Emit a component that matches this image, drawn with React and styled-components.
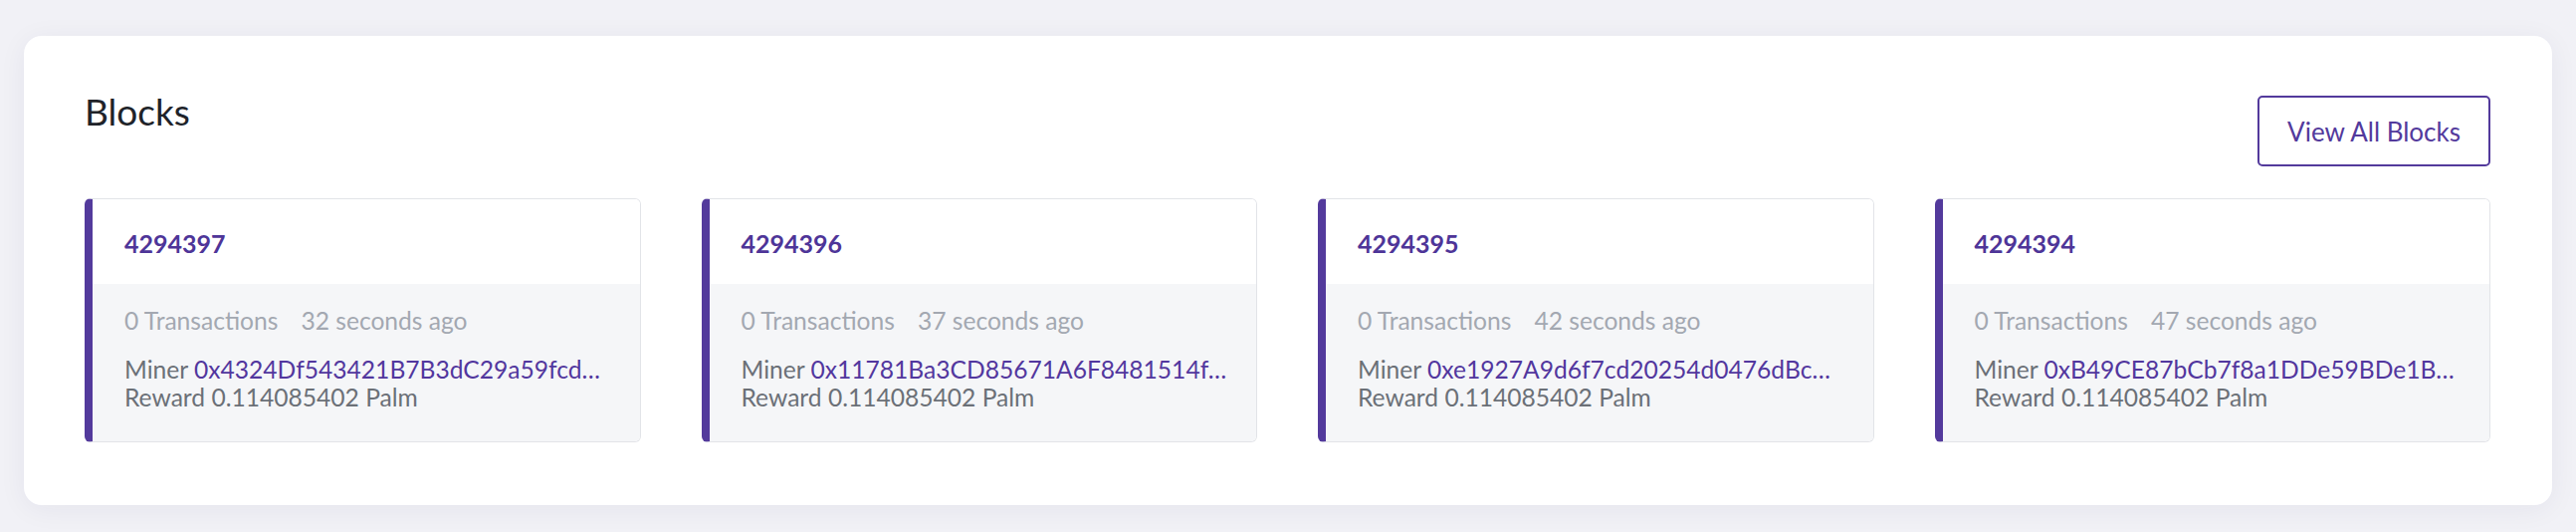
import styled, { createGlobalStyle } from "styled-components";

const GlobalStyle = createGlobalStyle`
  html, body {
    margin: 0;
    min-height: 100%;
    background: #f1f1f6;
    font-family: Lato, "Noto Sans", sans-serif;
  }
`;

const blocks = [
  { number: 4294397, age: 32, miner: "0x4324Df543421B7B3dC29a59fcd…" },
  { number: 4294396, age: 37, miner: "0x11781Ba3CD85671A6F8481514f…" },
  { number: 4294395, age: 42, miner: "0xe1927A9d6f7cd20254d0476dBc…" },
  { number: 4294394, age: 47, miner: "0xB49CE87bCb7f8a1DDe59BDe1B…" },
];

const BlockCard = ({ number, age, miner }) => (
  <Card>
    <CardHead>
      <BlockNumber href="#">{number}</BlockNumber>
    </CardHead>
    <CardBody>
      <Meta>
        <span>0 Transactions</span>
        <span>{age} seconds ago</span>
      </Meta>
      <Line>
        Miner <Address href="#">{miner}</Address>
      </Line>
      <Line>Reward 0.114085402 Palm</Line>
    </CardBody>
  </Card>
);

const App = () => {
  return (
    <Page>
      <GlobalStyle />
      <Panel>
        <Header>
          <Title>Blocks</Title>
          <ViewAll>View All Blocks</ViewAll>
        </Header>
        <Grid>
          {blocks.map((b) => (
            <BlockCard key={b.number} {...b} />
          ))}
        </Grid>
      </Panel>
    </Page>
  );
};

export default App;

const Page = styled.div`
  min-height: 534px;
  box-sizing: border-box;
  padding: 36px 24px 29px;
`;

const Panel = styled.section`
  background: #fff;
  border-radius: 18px;
  box-shadow: 0 4px 28px rgba(40, 40, 90, 0.06);
  padding: 54px 62px 63px 61px;
`;

const Header = styled.div`
  display: flex;
  justify-content: space-between;
  align-items: flex-start;
  margin-bottom: 32px;
`;

const Title = styled.h2`
  margin: 0;
  font-size: 37px;
  line-height: 44px;
  font-weight: 400;
  color: #202329;
`;

const ViewAll = styled.button`
  margin-top: 6px;
  height: 71px;
  padding: 0 28px;
  background: #fff;
  border: 2px solid #533a9c;
  border-radius: 5px;
  color: #533a9c;
  font-family: inherit;
  font-size: 26px;
  cursor: pointer;
`;

const Grid = styled.div`
  display: grid;
  grid-template-columns: repeat(4, 1fr);
  gap: 61px;
`;

const Card = styled.div`
  border: 1px solid #e2e4e8;
  border-left: 8px solid #533a9c;
  border-radius: 6px;
  overflow: hidden;
  min-width: 0;
`;

const CardHead = styled.div`
  background: #fff;
  padding: 30px 32px 26px;
`;

const BlockNumber = styled.a`
  display: block;
  font-size: 25px;
  line-height: 29px;
  font-weight: 700;
  color: #4e3598;
  text-decoration: none;
`;

const CardBody = styled.div`
  background: #f5f6f8;
  padding: 23px 8px 30px 32px;
  font-size: 24.6px;
  line-height: 28px;
`;

const Meta = styled.div`
  display: flex;
  gap: 23px;
  color: #a3a8b1;
  margin-bottom: 21px;
`;

const Line = styled.div`
  color: #6b7077;
  white-space: nowrap;
  overflow: hidden;
`;

const Address = styled.a`
  color: #52379e;
  text-decoration: none;
`;
